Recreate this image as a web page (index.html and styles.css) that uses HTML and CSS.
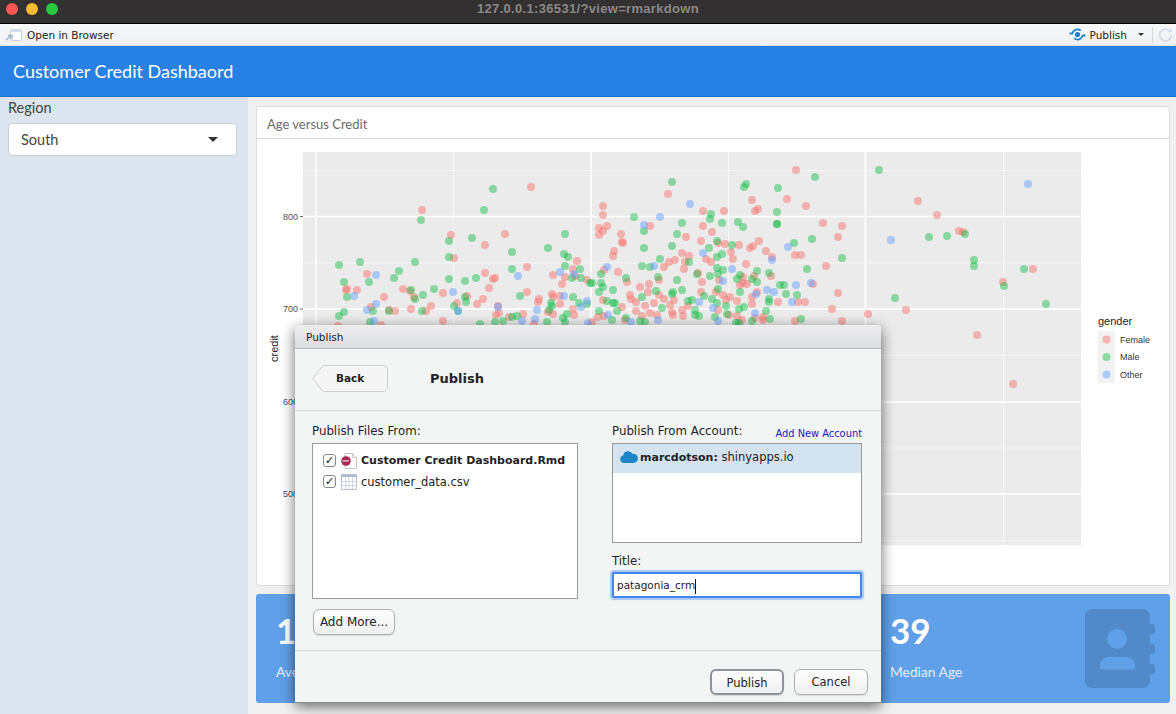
FILE: index.html
```html
<!DOCTYPE html>
<html lang="en">

<head>
    <meta charset="UTF-8">
    <title>Customer Credit Dashbaord</title>
    <link rel="stylesheet" href="styles.css">
</head>

<body>
    <div class="titlebar">
        <span class="light red"></span>
        <span class="light yellow"></span>
        <span class="light green"></span>
        <span class="url">127.0.0.1:36531/?view=rmarkdown</span>
    </div>

    <div class="toolbar">
        <svg class="browser-icon" width="18" height="14" viewBox="0 0 18 14">
            <rect x="5.500" y="1.500" width="11" height="11" rx="1" fill="#fff" stroke="#c3ccd8" />
            <path d="M5.500 1.500h11v2.500h-11z" fill="#d5e1ef" />
            <path d="M1 12l5-4M3 7.500h4v4" fill="none" stroke="#a3b3c6" stroke-width="1.400" />
        </svg>
        <span class="toolbar-label">Open in Browser</span>
        <span class="spacer"></span>
        <svg class="publish-icon" width="17" height="13" viewBox="0 0 17 13">
            <circle cx="8.500" cy="6.500" r="2.600" fill="#1c84c6" />
            <path d="M0.500 5.500h2.800C4.300 3 6 1.400 8.500 1.400c1.300 0 2.400 0.400 3.300 1.200" fill="none" stroke="#1c84c6" stroke-width="1.800" />
            <path d="M16.500 7.500h-2.800c-1 2.500-2.700 4.100-5.200 4.100-1.300 0-2.400-0.400-3.300-1.200" fill="none" stroke="#1c84c6" stroke-width="1.800" />
        </svg>
        <span class="toolbar-label">Publish</span>
        <span class="caret-small"></span>
        <span class="toolbar-sep"></span>
        <svg class="reload-icon" width="15" height="16" viewBox="0 0 16 16">
            <path d="M13 4.200A6.300 6.300 0 1 0 14.300 8" fill="none" stroke="#d3dbe6" stroke-width="2" />
            <path d="M9.500 5h5V0.500z" fill="#d3dbe6" />
        </svg>
    </div>

    <div class="navbar">Customer Credit Dashbaord</div>

    <div class="layout">
        <div class="sidebar">
            <div class="field-label">Region</div>
            <div class="select">
                <span>South</span>
                <span class="caret"></span>
            </div>
        </div>

        <div class="main">
            <div class="card">
                <div class="card-header">Age versus Credit</div>
                <svg id="plot" class="plot" width="912" height="446" viewBox="257 139 912 446">
                    <rect x="303" y="152" width="778" height="393" fill="#ebebeb" />
                    <g class="grid-minor">
                        <path d="M303 170.500H1081M303 263H1081M303 355.500H1081M303 448H1081M303 540.500H1081" />
                        <path d="M453.500 152V545M728.500 152V545M1003.500 152V545" />
                    </g>
                    <g class="grid-major">
                        <path d="M303 216.500H1081M303 309H1081M303 402H1081M303 494H1081" />
                        <path d="M316 152V545M591 152V545M865.500 152V545" />
                    </g>
                    <g class="ticks">
                        <path d="M300 216.500h3M300 309h3M300 402h3M300 494h3" />
                    </g>
                    <text class="tick-label" x="298" y="220">800</text>
                    <text class="tick-label" x="298" y="312">700</text>
                    <text class="tick-label" x="298" y="405">600</text>
                    <text class="tick-label" x="298" y="497">500</text>
                    <text class="axis-title" transform="translate(278 362) rotate(-90)" y="0" x="0">credit</text>
                    <g id="points"></g>
                    <text class="legend-title" x="1098" y="325">gender</text>
                    <rect x="1098" y="331" width="17" height="52" fill="#f2f2f2" />
                    <circle class="f" cx="1106.500" cy="339.500" r="4" />
                    <circle class="m" cx="1106.500" cy="357" r="4" />
                    <circle class="o" cx="1106.500" cy="374.500" r="4" />
                    <text class="legend-label" x="1120" y="343">Female</text>
                    <text class="legend-label" x="1120" y="360">Male</text>
                    <text class="legend-label" x="1120" y="378">Other</text>
                </svg>
            </div>

            <div class="boxes">
                <div class="box">
                    <div class="box-text">
                        <div class="box-value">1</div>
                        <div class="box-label">Average Credit</div>
                    </div>
                </div>
                <div class="box"></div>
                <div class="box">
                    <div class="box-text">
                        <div class="box-value">39</div>
                        <div class="box-label">Median Age</div>
                    </div>
                    <svg class="box-icon" width="70" height="80" viewBox="0 0 70 80">
                        <path d="M7 0h51a7 7 0 0 1 7 7v8h2a3 3 0 0 1 3 3v4a3 3 0 0 1-3 3h-2v10h2a3 3 0 0 1 3 3v4a3 3 0 0 1-3 3h-2v10h2a3 3 0 0 1 3 3v4a3 3 0 0 1-3 3h-2v7a7 7 0 0 1-7 7H7a7 7 0 0 1-7-7V7a7 7 0 0 1 7-7z" fill="#528ac9" />
                        <circle cx="32" cy="30" r="10" fill="#60a0e8" />
                        <path d="M15 60v-3c0-5 4-9 9-9h17c5 0 9 4 9 9v3c0 0.500-1 0.500-2 0.500H17c-1 0-2 0-2-0.500z" fill="#60a0e8" />
                    </svg>
                </div>
            </div>
        </div>
    </div>

    <div class="dialog">
        <div class="dialog-title">Publish</div>
        <div class="dialog-head">
            <div class="back-btn">
                <svg class="back-shape" width="76" height="27" viewBox="0 0 76 27">
                    <path d="M0.700 13.500L11 0.500H71a4.500 4.500 0 0 1 4.500 4.500v17a4.500 4.500 0 0 1-4.500 4.500H11z" fill="#f5f5f6" stroke="#cfcfcf" />
                </svg>
                <span class="back-text">Back</span>
            </div>
            <div class="dialog-heading">Publish</div>
        </div>
        <div class="dialog-body">
            <div class="col">
                <div class="col-label">Publish Files From:</div>
                <div class="list files">
                    <div class="file-row">
                        <span class="check">&#10003;</span>
                        <svg width="16" height="16" viewBox="0 0 16 16">
                            <path d="M4 0.500h7.500l4 4v11H4z" fill="#fff" stroke="#c4c4c4" />
                            <path d="M11.500 0.500v4h4" fill="none" stroke="#c4c4c4" />
                            <circle cx="5" cy="8" r="4.800" fill="#a82a52" />
                            <path d="M1.500 7.200h6.500v1.300H1.500z" fill="#f3d5de" />
                        </svg>
                        <span class="file-name bold">Customer Credit Dashboard.Rmd</span>
                    </div>
                    <div class="file-row">
                        <span class="check">&#10003;</span>
                        <svg width="16" height="16" viewBox="0 0 16 16">
                            <rect x="0.500" y="0.500" width="15" height="15" fill="#fff" stroke="#b8c2d0" />
                            <path d="M0.500 2h15" stroke="#a9bbd0" stroke-width="2" />
                            <path d="M0.500 7.500h15M0.500 11.500h15M4.500 3v12M8 3v12M11.500 3v12" stroke="#ced9e6" />
                        </svg>
                        <span class="file-name">customer_data.csv</span>
                    </div>
                </div>
                <div class="plain-btn add-more">Add More...</div>
            </div>
            <div class="col">
                <div class="col-label split">
                    <span>Publish From Account:</span>
                    <span class="add-link">Add New Account</span>
                </div>
                <div class="list accounts">
                    <div class="account-row">
                        <svg width="18" height="13" viewBox="0 0 18 13">
                            <path d="M4 13a3.800 3.800 0 0 1-0.800-7.500A5 5 0 0 1 12.500 3.800 4.500 4.500 0 0 1 14 13z" fill="#1a86c8" />
                        </svg>
                        <span><b class="account-name">marcdotson:</b> shinyapps.io</span>
                    </div>
                </div>
                <div class="col-label title-label">Title:</div>
                <div class="title-input">patagonia_crm<span class="cursor"></span></div>
            </div>
        </div>
        <div class="dialog-foot">
            <div class="plain-btn default">Publish</div>
            <div class="plain-btn">Cancel</div>
        </div>
    </div>

    <script src="plot.js"></script>
</body>

</html>
```

FILE: styles.css
```css
* {
    padding: 0;
    margin: 0;
    box-sizing: border-box;
}

html,
body {
    height: 714px;
    overflow: hidden;
}

body {
    display: flex;
    flex-direction: column;
    position: relative;
    background-color: #f0f0f0;
    font-family: Lato, sans-serif;
}

/* window chrome */
.titlebar {
    height: 24px;
    flex: none;
    display: flex;
    align-items: flex-start;
    gap: 8px;
    padding: 3px 0 0 6px;
    background-color: #323030;
    border-bottom: 1px solid #000;
    position: relative;
}

.light {
    width: 12px;
    height: 12px;
    border-radius: 50%;
}

.red {
    background-color: #fc5753;
}

.yellow {
    background-color: #fdbc2e;
}

.green {
    background-color: #28c840;
}

.url {
    position: absolute;
    left: 0;
    right: 0;
    top: 0;
    text-align: center;
    font-family: "Liberation Sans", sans-serif;
    font-weight: bold;
    font-size: 13px;
    letter-spacing: 0.32px;
    line-height: 18px;
    color: #8b8987;
}

.toolbar {
    height: 22px;
    flex: none;
    display: flex;
    align-items: center;
    padding: 0 3px 0 5px;
    background: linear-gradient(#f9f9fa, #eef0f2);
    border-bottom: 1px solid #dfe1e3;
}

.toolbar-label {
    font-family: "DejaVu Sans", sans-serif;
    font-size: 10.500px;
    color: #222;
}

.browser-icon {
    margin-right: 4px;
}

.spacer {
    flex: 1;
}

.publish-icon {
    margin-right: 4px;
}

.caret-small {
    margin: 0 8px 0 11px;
    border-top: 3px solid #333;
    border-left: 3px solid transparent;
    border-right: 3px solid transparent;
}

.toolbar-sep {
    width: 1px;
    height: 16px;
    background-color: #d8d8d8;
    margin-right: 5px;
}

.navbar {
    height: 51px;
    flex: none;
    padding: 0 13px;
    background-color: #2780e3;
    border-bottom: 1px solid #1e6fc8;
    color: #fff;
    font-size: 18px;
    line-height: 51px;
}

.layout {
    flex: 1;
    display: flex;
    min-height: 0;
}

.sidebar {
    width: 248px;
    flex: none;
    padding: 1px 11px 0 8px;
    background-color: #dce4f0;
    color: #444;
}

.field-label {
    font-size: 14.500px;
    line-height: 20px;
    margin-bottom: 5px;
}

.select {
    height: 33px;
    padding: 0 18px 0 12px;
    display: flex;
    align-items: center;
    justify-content: space-between;
    background-color: #fff;
    border: 1px solid #cfcfd2;
    border-radius: 4px;
    font-size: 14.500px;
}

.caret {
    border-top: 5px solid #333;
    border-left: 5px solid transparent;
    border-right: 5px solid transparent;
}

.main {
    flex: 1;
    padding: 9px 6px 0 8px;
    min-width: 0;
}

.card {
    height: 480px;
    background-color: #fff;
    border: 1px solid #ddd;
    border-radius: 3px;
}

.card-header {
    height: 32px;
    padding-left: 10px;
    border-bottom: 1px solid #d8d8d8;
    font-size: 13px;
    line-height: 35px;
    color: #6a6a6a;
}

.plot {
    display: block;
}

.plot path {
    fill: none;
}

.grid-minor path {
    stroke: #f6f6f6;
    stroke-width: 1;
}

.grid-major path {
    stroke: #fff;
    stroke-width: 1.500;
}

.ticks path {
    stroke: #444;
    stroke-width: 0.800;
}

.tick-label {
    font-family: "Liberation Sans", sans-serif;
    font-size: 9px;
    fill: #4d4d4d;
    text-anchor: end;
}

.axis-title,
.legend-title {
    font-family: "Liberation Sans", sans-serif;
    font-size: 11px;
    fill: #222;
}

.legend-label {
    font-family: "Liberation Sans", sans-serif;
    font-size: 9px;
    fill: #333;
}

.f {
    fill: #f8766d;
    opacity: 0.5;
}

.m {
    fill: #00ba38;
    opacity: 0.42;
}

.o {
    fill: #619cff;
    opacity: 0.48;
}

.boxes {
    margin-top: 8px;
    height: 109px;
    display: grid;
    grid-template-columns: repeat(3, 1fr);
    gap: 7px;
}

.box {
    padding: 0 15px 0 20px;
    display: flex;
    align-items: center;
    justify-content: space-between;
    background-color: #60a0e8;
    border-radius: 3px;
    color: #fff;
}

.box-text {
    align-self: flex-start;
    padding-top: 15px;
}

.box-value {
    font-size: 35px;
    font-weight: bold;
    line-height: 42px;
}

.box-label {
    margin-top: 11px;
    font-size: 13.800px;
    line-height: 20px;
    color: #e6f0fb;
}

/* publish dialog over the dashboard */
.dialog {
    position: absolute;
    left: 295px;
    top: 325px;
    width: 586px;
    height: 377px;
    display: flex;
    flex-direction: column;
    background-color: #f3f4f4;
    border-radius: 4px 4px 0 0;
    box-shadow: 0 1px 0 #8c8c8c, 0 4px 14px rgba(0, 0, 0, 0.6);
    font-family: "DejaVu Sans", sans-serif;
    font-size: 11px;
    color: #222;
}

.dialog-title {
    height: 24px;
    flex: none;
    padding-left: 11px;
    background: linear-gradient(#eeeeef, #dcdddf);
    border-bottom: 1px solid #b4b6b8;
    border-radius: 4px 4px 0 0;
    line-height: 24px;
    font-size: 10.500px;
}

.dialog-head {
    height: 62px;
    flex: none;
    display: flex;
    align-items: center;
    gap: 42px;
    padding-left: 17px;
    border-bottom: 1px solid #d9dbdb;
}

.back-btn {
    width: 76px;
    height: 27px;
    margin-top: -3px;
    position: relative;
    font-weight: bold;
    line-height: 27px;
    font-size: 10.500px;
}

.back-shape {
    position: absolute;
    left: 0;
    top: 0;
}

.back-text {
    position: relative;
    margin-left: 24px;
}

.dialog-heading {
    margin-top: -3px;
    font-weight: bold;
    font-size: 13px;
}

.dialog-body {
    flex: 1;
    display: grid;
    grid-template-columns: 266px 250px;
    gap: 34px;
    padding: 11px 0 0 17px;
}

.col {
    min-width: 0;
}

.col-label {
    height: 21px;
    line-height: 19px;
    font-size: 11.800px;
}

.split {
    display: flex;
    justify-content: space-between;
}

.add-link {
    margin-top: 5px;
    font-size: 9.850px;
    line-height: 14px;
    color: #1a1ab8;
}

.list {
    background-color: #fff;
    border: 1px solid #999;
}

.files {
    height: 156px;
    padding-top: 6px;
}

.file-row {
    height: 21px;
    display: flex;
    align-items: center;
    gap: 4px;
    padding-left: 10px;
}

.file-name {
    font-size: 11.500px;
    white-space: nowrap;
}

.file-name.bold {
    font-size: 11px;
    font-weight: bold;
}

.check {
    width: 13px;
    height: 13px;
    flex: none;
    margin-right: 1px;
    background-color: #fff;
    border: 1px solid #888;
    border-radius: 3px;
    font-size: 11px;
    line-height: 11px;
    text-align: center;
    color: #111;
}

.plain-btn {
    width: 74px;
    height: 26px;
    background: linear-gradient(#fdfdfd, #f0f0f1);
    border: 1px solid #aeb0b2;
    border-radius: 6px;
    box-shadow: 0 1px 1px rgba(0, 0, 0, 0.12);
    font-size: 11.500px;
    line-height: 24px;
    text-align: center;
}

.add-more {
    width: 82px;
    margin: 10px 0 0 1px;
    font-size: 12px;
}

.accounts {
    height: 100px;
}

.account-row {
    height: 29px;
    display: flex;
    align-items: center;
    gap: 2px;
    padding: 0 0 4px 7px;
    background-color: #d4e3f0;
    font-size: 11.500px;
}

.account-name {
    font-size: 11px;
}

.title-label {
    margin-top: 9px;
    height: 20px;
}

.title-input {
    height: 26px;
    padding-left: 3px;
    background-color: #fff;
    border: 2px solid #3f87e8;
    border-radius: 2px;
    box-shadow: 0 0 1px 2px #a9c8f2;
    font-size: 10.500px;
    line-height: 22px;
    white-space: nowrap;
}

.cursor {
    display: inline-block;
    width: 1px;
    height: 15px;
    background-color: #111;
    vertical-align: middle;
}

.dialog-foot {
    height: 52px;
    flex: none;
    display: flex;
    justify-content: flex-end;
    align-items: flex-start;
    gap: 10px;
    padding: 18px 13px 0 0;
    border-top: 1px solid #d9dbdb;
}

.default {
    border: 2px solid #8d949e;
}
```

FILE: plot.js
```js
// scatter points in page pixels, [x, y] pairs by gender
var female = [422,210,531,187,451,235,454,258,505,234,485,245,367,274,347,289,346,290,357,290,384,297,403,289,410,291,414,297,411,309,395,311,389,310,371,307,431,306,426,311,443,293,457,303,467,296,477,304,483,299,485,273,489,288,493,279,495,278,527,267,527,292,539,299,538,302,498,306,496,315,499,313,509,317,523,314,553,275,562,284,565,277,573,269,577,261,575,276,587,280,552,294,553,297,560,296,560,304,548,312,553,314,573,309,574,315,443,321,338,326,381,325,534,324,
    668,194,603,206,603,215,607,226,599,228,603,231,599,235,621,234,622,242,623,243,614,251,613,256,650,226,703,211,724,211,703,226,712,232,686,237,701,241,725,244,718,243,739,245,750,248,753,246,759,241,766,251,772,257,731,252,733,259,746,264,752,200,755,211,758,209,787,199,806,206,796,170,823,223,842,226,838,237,795,255,801,255,826,266,918,201,838,293,832,309,868,314,906,310,842,321,795,321,778,302,798,302,805,302,813,284,771,276,682,253,689,256,675,260,669,262,664,267,685,262,684,269,706,259,711,262,604,270,618,272,627,282,640,287,649,284,659,280,648,292,630,295,631,299,636,302,636,311,622,307,603,300,645,306,654,303,659,295,664,299,670,305,674,300,642,316,650,313,657,315,672,312,673,315,682,310,683,316,688,306,702,282,698,273,701,292,716,292,723,295,730,297,737,301,726,300,752,304,752,297,757,292,740,285,743,283,747,284,743,277,754,276,719,280,718,310,729,315,737,316,742,320,755,318,763,317,763,320,598,317,604,316,625,320,592,322,
    937,215,959,231,963,232,1003,282,1033,269,977,335,1013,384];
var male = [339,265,360,262,344,282,347,297,369,282,339,316,344,312,373,311,389,311,394,278,399,271,415,262,421,220,411,290,415,299,423,295,422,311,434,289,449,241,449,257,449,279,472,238,484,210,493,189,476,278,465,281,454,306,458,311,465,297,466,302,512,252,512,269,520,296,548,248,565,234,564,254,568,257,565,266,580,269,572,278,581,278,590,283,573,297,551,303,552,306,549,310,579,303,587,304,567,314,563,318,565,322,547,322,512,317,517,316,503,321,495,322,480,324,370,322,
    672,182,634,217,644,231,644,248,682,223,677,234,672,246,660,259,642,266,650,267,658,277,689,262,709,248,711,214,710,219,722,223,717,241,717,257,722,254,732,245,738,222,743,227,744,187,746,184,778,188,815,177,879,170,777,212,777,224,777,224,794,243,812,239,842,258,807,269,757,271,769,273,717,268,723,270,718,274,710,276,697,274,737,279,740,275,752,279,757,282,718,289,740,292,780,285,784,285,786,294,797,295,769,299,769,302,895,298,704,296,712,299,717,303,726,306,744,307,739,309,766,311,770,319,801,319,727,314,592,283,601,274,601,283,603,287,599,292,613,290,607,301,613,303,615,303,626,278,642,297,656,291,672,294,673,292,682,290,677,280,688,301,692,300,662,308,617,311,599,311,612,320,626,318,640,321,645,322,695,310,695,315,699,316,715,317,736,323,739,323,752,321,
    929,237,947,236,965,234,974,260,974,266,1004,286,1024,269,1046,304];
var other = [376,275,354,296,376,304,367,310,374,321,453,292,458,311,498,307,518,276,560,272,574,274,564,296,537,310,522,321,535,319,581,307,587,301,588,323,
    690,204,660,217,644,225,891,240,788,247,772,260,703,253,732,269,723,281,654,266,607,267,767,290,774,292,796,285,811,283,792,302,756,294,699,302,713,308,755,313,608,315,658,320,631,322,718,321,1028,184];

var group = document.getElementById('points');

function addPoints(list, name) {
    for (var i = 0; i < list.length; i += 2) {
        var c = document.createElementNS('http://www.w3.org/2000/svg', 'circle');
        c.setAttribute('class', name);
        c.setAttribute('cx', list[i]);
        c.setAttribute('cy', list[i + 1]);
        c.setAttribute('r', 4);
        group.appendChild(c);
    }
}

addPoints(female, 'f');
addPoints(male, 'm');
addPoints(other, 'o');
```
